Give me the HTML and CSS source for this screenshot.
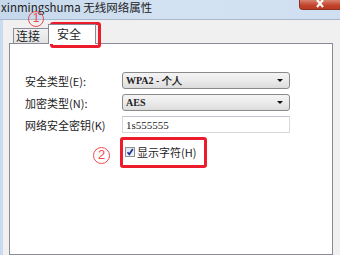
FILE: index.html
```html
<!DOCTYPE html>
<html lang="zh">
<head>
<meta charset="utf-8">
<title>无线网络属性</title>
<link rel="stylesheet" href="styles.css">
</head>
<body>
<div class="window">
  <div class="titlebar">
    <span class="title">xinmingshuma 无线网络属性</span>
    <span class="close"><svg width="12" height="8" viewBox="0 0 12 8"><path d="M3 0 L9 7 M9 0 L3 7" stroke="#fff" stroke-width="2.2"/></svg></span>
  </div>
  <div class="frame">
    <div class="edge"></div>
    <div class="body">
      <div class="tabs">
        <div class="tab">连接</div>
        <div class="tab active">安全</div>
      </div>
      <div class="panel">
        <div class="row">
          <span class="label">安全类型(E):</span>
          <div class="select"><span class="value">WPA2 - 个人</span><span class="arrow"></span></div>
        </div>
        <div class="row">
          <span class="label">加密类型(N):</span>
          <div class="select"><span class="value">AES</span><span class="arrow"></span></div>
        </div>
        <div class="row">
          <span class="label">网络安全密钥(K)</span>
          <div class="input"><span class="value">1s555555</span></div>
        </div>
        <div class="check-row">
          <span class="checkbox"><svg width="8" height="8" viewBox="0 0 8 8"><path d="M1.5 4.2 L3.3 6.3 L6.8 1" fill="none" stroke="#1c2f8c" stroke-width="1.6"/></svg></span>
          <span class="check-label">显示字符(H)</span>
        </div>
      </div>
    </div>
  </div>
  <div class="mark mark-tab"></div>
  <div class="mark mark-check"></div>
  <div class="num num1">1</div>
  <div class="num num2">2</div>
</div>
</body>
</html>
```

FILE: styles.css
```css
html, body {
  margin: 0;
  padding: 0;
  background: #f0f0f0;
}
body {
  width: 340px;
  height: 255px;
  overflow: hidden;
  font-family: "Noto Sans CJK SC", "Liberation Sans", sans-serif;
  color: #1e1e1e;
}
.window {
  position: relative;
  width: 340px;
  height: 255px;
  display: flex;
  flex-direction: column;
}
.titlebar {
  height: 19px;
  flex: none;
  display: flex;
  justify-content: space-between;
  align-items: flex-start;
  background: linear-gradient(to right, #c5d8ec, #d3e2f2 50%, #cfdff1);
  border-bottom: 1px solid #a9b8c9;
}
.title {
  font-size: 11.5px;
  line-height: 15px;
  padding: 0 0 0 1px;
  color: #222;
}
.close {
  width: 41px;
  height: 10px;
  display: flex;
  justify-content: center;
  align-items: flex-start;
  background: linear-gradient(#d8826f, #c2432c 60%, #b83a24);
  border: 1px solid #8b3323;
  border-top: none;
  border-right: none;
  border-radius: 0 0 0 4px;
  box-sizing: border-box;
}
.frame {
  flex: 1;
  display: flex;
}
.edge {
  width: 3px;
  background: #c9dcef;
}
.body {
  flex: 1;
  display: flex;
  flex-direction: column;
  padding: 0 7px 0 6px;
  background: #f0f0f0;
}
.tabs {
  height: 24px;
  flex: none;
  display: flex;
  align-items: flex-end;
  padding-left: 4px;
  margin-bottom: -1px;
  position: relative;
  z-index: 1;
}
.tab {
  height: 15px;
  width: 36px;
  box-sizing: border-box;
  border: 1px solid #898c95;
  border-bottom: none;
  background: linear-gradient(#f2f2f2, #e3e3e3);
  font-size: 12px;
  line-height: 14px;
  padding-left: 2px;
  margin-bottom: 1px;
}
.tab.active {
  height: 20px;
  width: 48px;
  margin-left: -1px;
  margin-bottom: 0;
  background: #fff;
  padding-left: 8px;
  line-height: 18px;
}
.panel {
  flex: 1;
  background: #fff;
  border: 1px solid #898c95;
  padding: 28px 0 0 15px;
  display: flex;
  flex-direction: column;
  gap: 5px;
}
.row {
  display: flex;
  align-items: center;
  height: 17px;
}
.label {
  width: 97px;
  font-size: 11px;
  color: #222;
}
.select, .input {
  width: 168px;
  height: 17px;
  box-sizing: border-box;
  display: flex;
  align-items: center;
  justify-content: space-between;
  padding: 0 6px 0 3px;
  font-family: "Liberation Serif", serif;
  font-size: 11px;
  color: #222;
}
.select {
  border: 1px solid #8a8a8a;
  border-radius: 3px;
  background: linear-gradient(#f4f4f4, #ebebeb 50%, #dcdcdc);
}
.select .value {
  font-weight: bold;
  font-size: 10px;
}
.input {
  border: 1px solid #d6d8dd;
  border-top-color: #c2c5cc;
  background: #fff;
}
.arrow {
  width: 0;
  height: 0;
  border-left: 3px solid transparent;
  border-right: 3px solid transparent;
  border-top: 3px solid #111;
}
.check-row {
  display: flex;
  align-items: center;
  margin-top: 6px;
  padding-left: 100px;
  gap: 2px;
}
.checkbox {
  width: 10px;
  height: 10px;
  box-sizing: border-box;
  border: 1px solid #8f8f8f;
  background: linear-gradient(#dfe9f5, #eef3fa);
  display: flex;
  align-items: center;
  justify-content: center;
}
.check-label {
  font-size: 11px;
  color: #222;
}
.mark {
  position: absolute;
  box-sizing: border-box;
  border: 3px solid #ec1c2c;
  border-radius: 3px;
}
.mark-tab {
  left: 50px;
  top: 22px;
  width: 51px;
  height: 26px;
}
.mark-check {
  left: 120px;
  top: 137px;
  width: 87px;
  height: 31px;
}
.num {
  position: absolute;
  box-sizing: border-box;
  border: 1.5px solid #ef4a50;
  border-radius: 50%;
  color: #ef4a50;
  font-family: "Liberation Sans", sans-serif;
  font-size: 12px;
  line-height: 13px;
  text-align: center;
}
.num1 {
  left: 28px;
  top: 11px;
  width: 16px;
  height: 16px;
}
.num2 {
  left: 93px;
  top: 147px;
  width: 17px;
  height: 17px;
  line-height: 14px;
  font-size: 13px;
}
```
